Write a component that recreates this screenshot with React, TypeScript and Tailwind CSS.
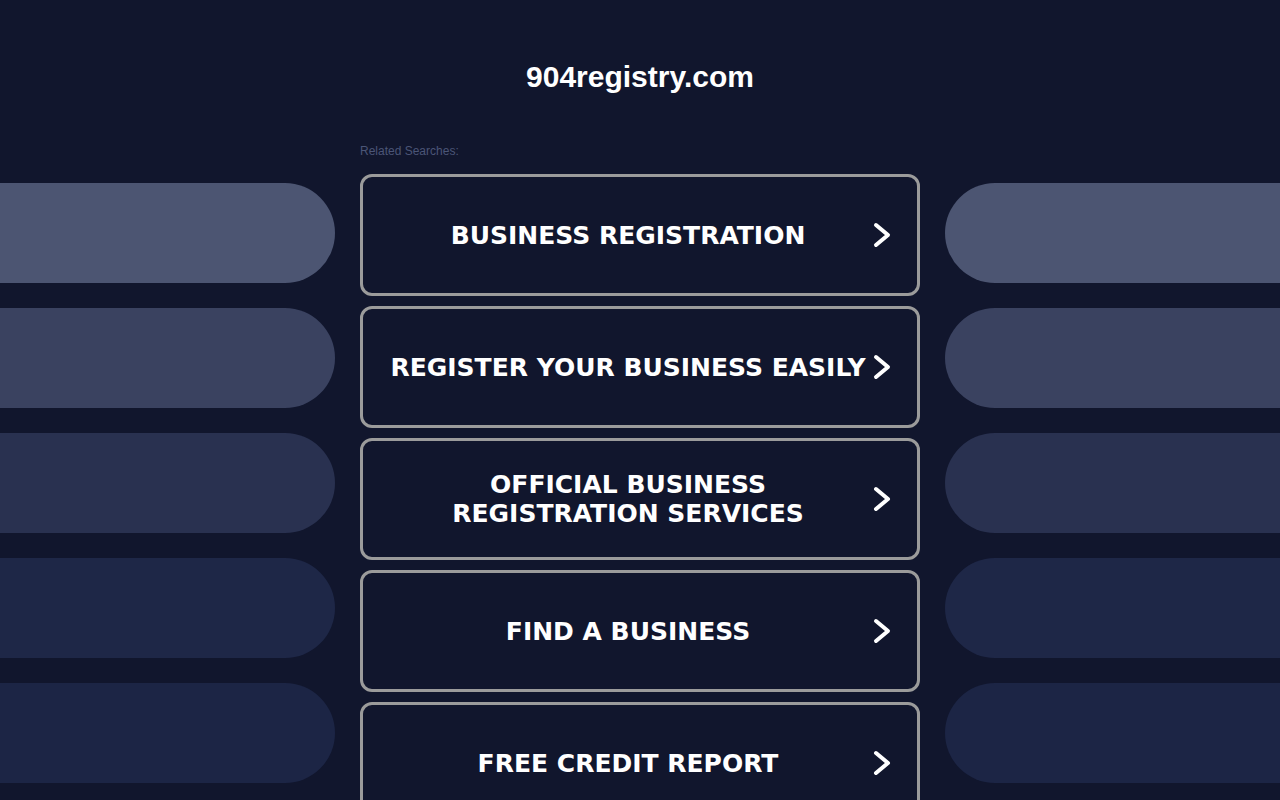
const searches = [
  'BUSINESS REGISTRATION',
  'REGISTER YOUR BUSINESS EASILY',
  'OFFICIAL BUSINESS REGISTRATION SERVICES',
  'FIND A BUSINESS',
  'FREE CREDIT REPORT',
]

const pillColors = ['bg-[#4c5572]', 'bg-[#3a4260]', 'bg-[#293150]', 'bg-[#1e2747]', 'bg-[#1c2545]']

function Chevron() {
  return (
    <svg width="20" height="28" viewBox="0 0 20 28" className="shrink-0">
      <polyline
        points="4,4 16,14 4,24"
        fill="none"
        stroke="#ffffff"
        strokeWidth="4"
        strokeLinecap="round"
        strokeLinejoin="round"
      />
    </svg>
  )
}

function Pills({ side }: { side: 'left' | 'right' }) {
  return (
    <div className="flex flex-col gap-[25px] pt-[183px]">
      {pillColors.map((c) => (
        <div
          key={c}
          className={`h-[100px] ${c} ${side === 'left' ? 'rounded-r-[50px]' : 'rounded-l-[50px]'}`}
        />
      ))}
    </div>
  )
}

export default function App() {
  return (
    <div className="h-[800px] overflow-hidden bg-[#11162d]">
      <div className="grid grid-cols-[335px_560px_335px] gap-x-[25px]">
        <Pills side="left" />
        <div className="flex flex-col">
          <h1 className="pt-[58px] text-center font-['Liberation_Sans',Arial,sans-serif] text-[30px] font-bold leading-[38px] text-white">
            904registry.com
          </h1>
          <p className="mt-[48px] font-['Liberation_Sans',Arial,sans-serif] text-[12px] leading-[14px] text-[#4b5577]">
            Related Searches:
          </p>
          <div className="mt-[16px] flex flex-col gap-[10px]">
            {searches.map((s) => (
              <a
                key={s}
                href="#"
                className="flex h-[122px] items-center gap-[1px] rounded-[12px] border-[3px] border-[#9b9b9b] bg-[#11162d] pl-[22px] pr-[25px]"
              >
                <span className="flex-1 text-center font-['DejaVu_Sans',Verdana,sans-serif] text-[25px] font-bold leading-[29px] text-white">
                  {s}
                </span>
                <Chevron />
              </a>
            ))}
          </div>
        </div>
        <Pills side="right" />
      </div>
    </div>
  )
}
